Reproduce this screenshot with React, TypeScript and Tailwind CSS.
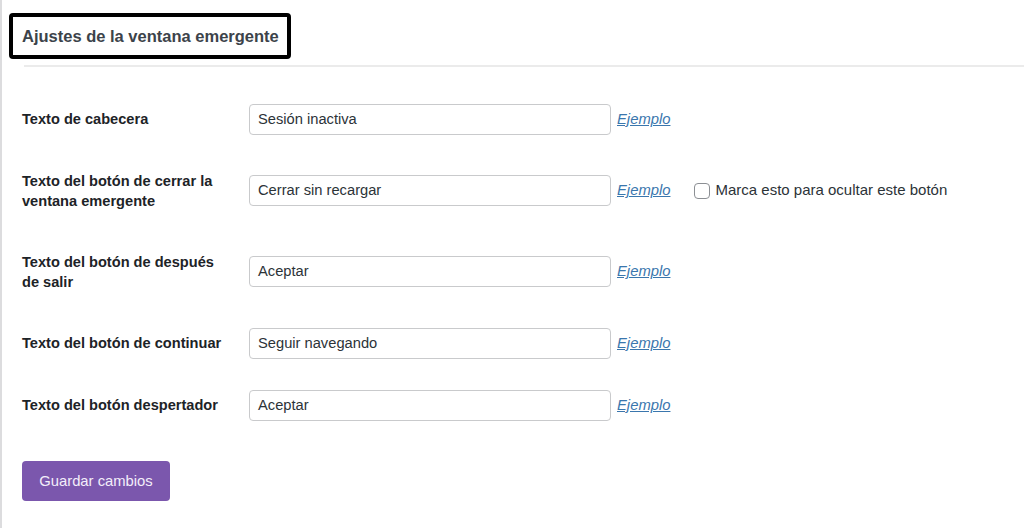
import React from "react";

const rows: { label: string; value: string; h: string; extra?: boolean }[] = [
  { label: "Texto de cabecera", value: "Sesión inactiva", h: "h-[62px]" },
  { label: "Texto del botón de cerrar la ventana emergente", value: "Cerrar sin recargar", h: "h-[81px]", extra: true },
  { label: "Texto del botón de después de salir", value: "Aceptar", h: "h-[81px]" },
  { label: "Texto del botón de continuar", value: "Seguir navegando", h: "h-[62px]" },
  { label: "Texto del botón despertador", value: "Aceptar", h: "h-[62px]" },
];

export default function App() {
  return (
    <div
      className="w-[1024px] h-[528px] bg-white border-l-2 border-[#dcdcde] overflow-hidden"
      style={{ fontFamily: '"Liberation Sans", Arial, sans-serif' }}
    >
      <div className="pt-[13px] pl-[7px]">
        <div className="w-[282px] h-[46px] border-4 border-black rounded-[4px] flex items-center pl-[9px]">
          <h2 className="text-[16.5px] font-bold text-[#3c434a] leading-none">
            Ajustes de la ventana emergente
          </h2>
        </div>
      </div>
      <div className="ml-[22px] mt-[6px] h-[2px] bg-[#ebebeb]" />
      <div className="pl-[20px] pt-[21px]">
        {rows.map((r) => (
          <div key={r.label} className={`flex items-center ${r.h}`}>
            <div className="w-[227px] pr-[22px] text-[14.6px] font-bold leading-[20px] text-[#1d2327]">
              {r.label}
            </div>
            <div className="w-[362px] h-[31px] border border-[#c9cacc] rounded-[4px] flex items-center px-[8px] text-[14.7px] text-[#2c3338] bg-white">
              {r.value}
            </div>
            <a className="ml-[6px] text-[14.8px] italic underline text-[#3a76ad]" href="#">
              Ejemplo
            </a>
            {r.extra && (
              <div className="flex items-center ml-[24px]">
                <span className="w-[16px] h-[16px] border border-[#8c8f94] rounded-[4px] bg-white" />
                <span className="ml-[5px] text-[15px] text-[#2c3338]">
                  Marca esto para ocultar este botón
                </span>
              </div>
            )}
          </div>
        ))}
        <button className="mt-[25px] w-[148px] h-[40px] rounded-[4px] bg-[#7b57ad] text-[14.8px] text-[#f3eefa] flex items-center justify-center">
          Guardar cambios
        </button>
      </div>
    </div>
  );
}
